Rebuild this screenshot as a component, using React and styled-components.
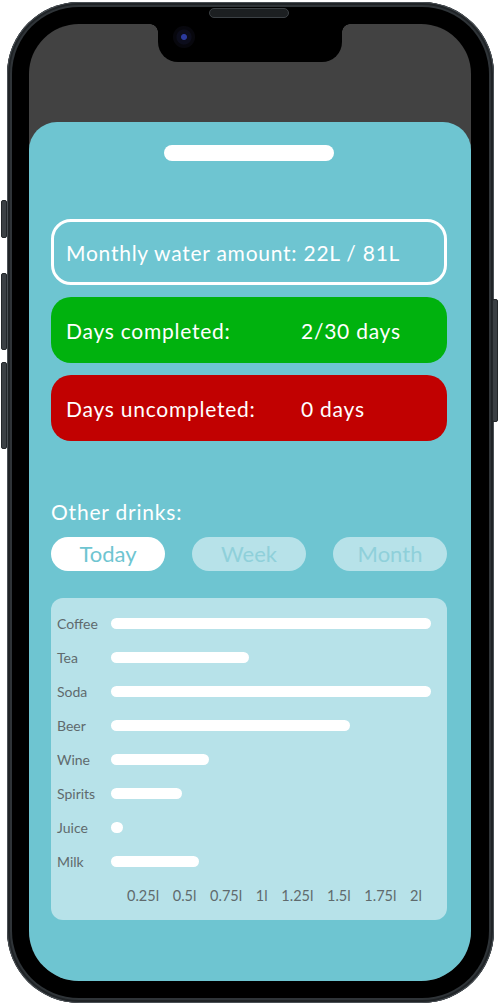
import React from 'react';
import styled, { createGlobalStyle } from 'styled-components';

const GlobalStyle = createGlobalStyle`
  * { box-sizing: border-box; }
  body {
    margin: 0;
    background: #ffffff;
    font-family: 'Lato', 'Open Sans', sans-serif;
  }
`;

const TEAL = '#6ec5d1';
const LIGHT = '#b7e2e9';

const Page = styled.div`
  padding: 2px 0 0 7px;
`;

const Phone = styled.div`
  position: relative;
  width: 487px;
  height: 1001px;
`;

const SideButton = styled.div`
  position: absolute;
  top: ${p => p.top}px;
  height: ${p => p.h}px;
  width: 6px;
  ${p => (p.right ? 'right: -4px;' : 'left: -6px;')}
  background: #3b4044;
  border: 1px solid #23272a;
  border-radius: 2px;
`;

const Frame = styled.div`
  height: 100%;
  padding: 5px;
  border-radius: 72px;
  background: #2f3438;
  box-shadow: inset 0 0 0 1px #4a5055, inset 0 0 0 3px #202427;
`;

const Bezel = styled.div`
  height: 100%;
  padding: 17px 18px 17px 17px;
  border-radius: 67px;
  background: #000;
`;

const Screen = styled.div`
  position: relative;
  height: 100%;
  border-radius: 50px;
  overflow: hidden;
  background: #424242;
  display: flex;
  flex-direction: column;
`;

const Notch = styled.div`
  position: absolute;
  top: 0;
  left: 50%;
  width: 184px;
  margin-left: -92px;
  height: 38px;
  background: #000;
  border-radius: 0 0 20px 20px;

  &::before,
  &::after {
    content: '';
    position: absolute;
    top: 0;
    width: 8px;
    height: 8px;
  }
  &::before {
    left: -8px;
    background: radial-gradient(circle at 0 100%, transparent 7.5px, #000 8px);
  }
  &::after {
    right: -8px;
    background: radial-gradient(circle at 100% 100%, transparent 7.5px, #000 8px);
  }
`;

const Camera = styled.div`
  position: absolute;
  top: 2px;
  left: 15px;
  width: 22px;
  height: 22px;
  border-radius: 50%;
  background: radial-gradient(circle, #2b3a9e 0 2.5px, #0c0d1c 3.5px 7px, #07070d 8px);
`;

const Speaker = styled.div`
  position: absolute;
  top: 6px;
  left: 50%;
  width: 80px;
  margin-left: -42px;
  height: 10px;
  border-radius: 5px;
  background: #1c1f21;
  border: 1px solid #3c4145;
`;

const StatusArea = styled.div`
  height: 98px;
  flex-shrink: 0;
`;

const Sheet = styled.div`
  flex: 1;
  background: ${TEAL};
  border-radius: 28px 28px 0 0;
  padding: 23px 24px 0 22px;
  display: flex;
  flex-direction: column;
`;

const Handle = styled.div`
  width: 170px;
  height: 16px;
  margin: 0 auto;
  border-radius: 8px;
  background: #fff;
`;

const Stats = styled.div`
  margin-top: 58px;
  display: flex;
  flex-direction: column;
  gap: 12px;
`;

const StatBox = styled.div`
  height: 66px;
  border-radius: 20px;
  display: grid;
  grid-template-columns: 235px auto;
  align-items: center;
  padding: 0 ${p => (p.variant === 'outline' ? 12 : 15)}px;
  color: #fff;
  font-size: 21px;
  letter-spacing: 0.75px;
  background: ${p =>
    p.variant === 'green' ? '#00b20e' : p.variant === 'red' ? '#c10101' : 'transparent'};
  border: ${p => (p.variant === 'outline' ? '3px solid #fff' : 'none')};
`;

const FullText = styled.span`
  grid-column: 1 / -1;
`;

const SectionTitle = styled.div`
  margin-top: 58px;
  font-size: 21px;
  letter-spacing: 0.8px;
  line-height: 25px;
  color: #fff;
`;

const Tabs = styled.div`
  margin-top: 13px;
  display: grid;
  grid-template-columns: repeat(3, 1fr);
  gap: 27px;
`;

const Tab = styled.div`
  height: 34px;
  border-radius: 17px;
  text-align: center;
  font-size: 22px;
  line-height: 34px;
  background: ${p => (p.active ? '#fff' : LIGHT)};
  color: ${p => (p.active ? TEAL : '#8fd0da')};
`;

const ChartCard = styled.div`
  margin-top: 27px;
  background: ${LIGHT};
  border-radius: 12px;
  padding: 8px 16px 8px 6px;
`;

const Row = styled.div`
  height: 34px;
  display: grid;
  grid-template-columns: 54px 1fr;
  align-items: center;
`;

const Label = styled.span`
  font-size: 14px;
  color: #5f6a6d;
`;

const Track = styled.div`
  height: 11px;
`;

const Bar = styled.div`
  height: 11px;
  min-width: 12px;
  border-radius: 6px;
  background: #fff;
`;

const Axis = styled.div`
  height: 34px;
  display: flex;
  justify-content: space-between;
  align-items: center;
  padding: 0 9px 0 70px;
  font-size: 14.5px;
  color: #5f6a6d;
`;

const drinks = [
  { name: 'Coffee', width: 320 },
  { name: 'Tea', width: 138 },
  { name: 'Soda', width: 320 },
  { name: 'Beer', width: 239 },
  { name: 'Wine', width: 98 },
  { name: 'Spirits', width: 71 },
  { name: 'Juice', width: 12 },
  { name: 'Milk', width: 88 },
];

const ticks = ['0.25l', '0.5l', '0.75l', '1l', '1.25l', '1.5l', '1.75l', '2l'];

const App = () => {
  return (
    <Page>
      <GlobalStyle />
      <Phone>
        <SideButton top={198} h={38} />
        <SideButton top={271} h={77} />
        <SideButton top={360} h={87} />
        <SideButton right top={297} h={123} />
        <Frame>
          <Bezel>
            <Screen>
              <Notch>
                <Camera />
              </Notch>
              <StatusArea />
              <Sheet>
                <Handle />
                <Stats>
                  <StatBox variant="outline">
                    <FullText>Monthly water amount: 22L / 81L</FullText>
                  </StatBox>
                  <StatBox variant="green">
                    <span>Days completed:</span>
                    <span>2/30 days</span>
                  </StatBox>
                  <StatBox variant="red">
                    <span>Days uncompleted:</span>
                    <span>0 days</span>
                  </StatBox>
                </Stats>

                <SectionTitle>Other drinks:</SectionTitle>
                <Tabs>
                  <Tab active>Today</Tab>
                  <Tab>Week</Tab>
                  <Tab>Month</Tab>
                </Tabs>

                <ChartCard>
                  {drinks.map(d => (
                    <Row key={d.name}>
                      <Label>{d.name}</Label>
                      <Track>
                        <Bar style={{ width: `${(d.width / 320) * 100}%` }} />
                      </Track>
                    </Row>
                  ))}
                  <Axis>
                    {ticks.map(t => (
                      <span key={t}>{t}</span>
                    ))}
                  </Axis>
                </ChartCard>
              </Sheet>
            </Screen>
          </Bezel>
        </Frame>
        <Speaker />
      </Phone>
    </Page>
  );
};

export default App;
